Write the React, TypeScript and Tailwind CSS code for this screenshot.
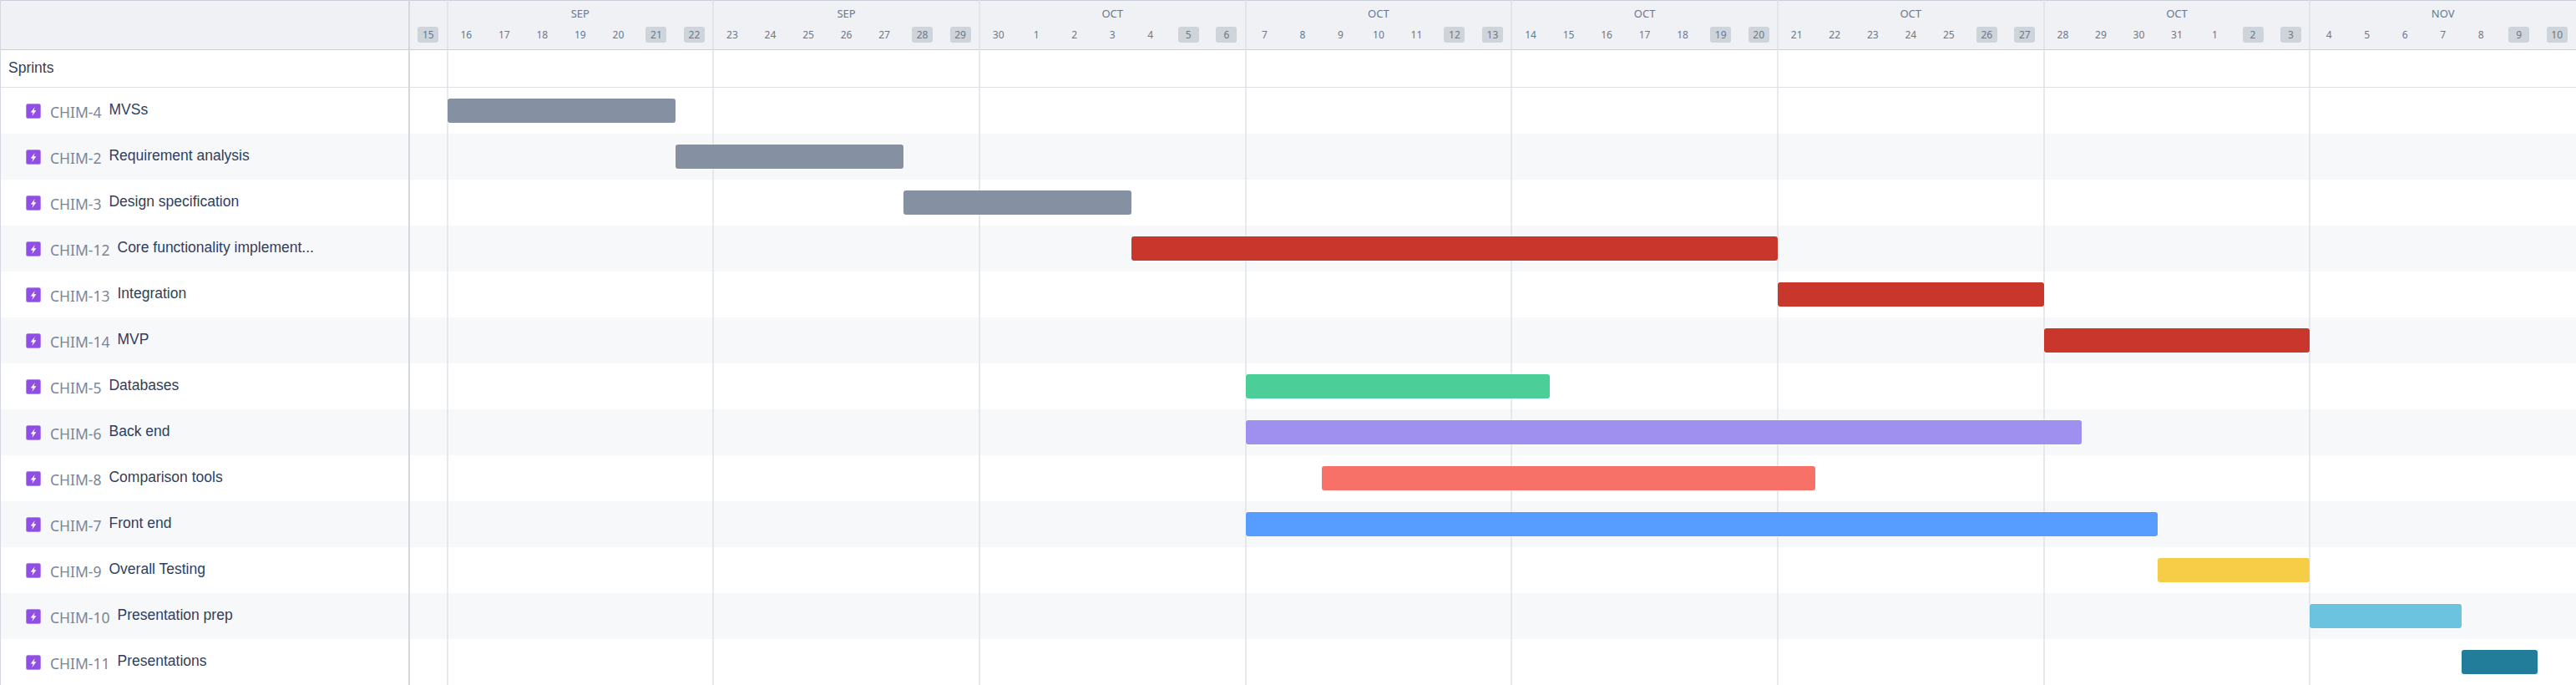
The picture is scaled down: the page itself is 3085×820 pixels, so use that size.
import { Fragment } from 'react';

// [key, title, first day index, end day index, bar colour]
const issues = [
  { id: 'CHIM-4', title: 'MVSs', start: 1, end: 7, color: 'bg-[#8590a2]' },
  { id: 'CHIM-2', title: 'Requirement analysis', start: 7, end: 13, color: 'bg-[#8590a2]' },
  { id: 'CHIM-3', title: 'Design specification', start: 13, end: 19, color: 'bg-[#8590a2]' },
  { id: 'CHIM-12', title: 'Core functionality implement...', start: 19, end: 36, color: 'bg-[#c9372c]' },
  { id: 'CHIM-13', title: 'Integration', start: 36, end: 43, color: 'bg-[#c9372c]' },
  { id: 'CHIM-14', title: 'MVP', start: 43, end: 50, color: 'bg-[#c9372c]' },
  { id: 'CHIM-5', title: 'Databases', start: 22, end: 30, color: 'bg-[#4bce97]' },
  { id: 'CHIM-6', title: 'Back end', start: 22, end: 44, color: 'bg-[#9f8fef]' },
  { id: 'CHIM-8', title: 'Comparison tools', start: 24, end: 37, color: 'bg-[#f87168]' },
  { id: 'CHIM-7', title: 'Front end', start: 22, end: 46, color: 'bg-[#579dff]' },
  { id: 'CHIM-9', title: 'Overall Testing', start: 46, end: 50, color: 'bg-[#f5cd47]' },
  { id: 'CHIM-10', title: 'Presentation prep', start: 50, end: 54, color: 'bg-[#6cc3e0]' },
  { id: 'CHIM-11', title: 'Presentations', start: 54, end: 56, color: 'bg-[#227d9b]' },
];

const months = ['SEP', 'SEP', 'OCT', 'OCT', 'OCT', 'OCT', 'OCT', 'NOV'];

const days = [
  15, 16, 17, 18, 19, 20, 21, 22, 23, 24, 25, 26, 27, 28, 29, 30, 1, 2, 3, 4, 5, 6, 7, 8, 9, 10, 11, 12, 13, 14, 15, 16, 17,
  18, 19, 20, 21, 22, 23, 24, 25, 26, 27, 28, 29, 30, 31, 1, 2, 3, 4, 5, 6, 7, 8, 9, 10,
];

const isWeekend = (index: number) => index % 7 === 0 || index % 7 === 6;

const EpicIcon = () => (
  <svg className="h-[18px] w-[18px] shrink-0" viewBox="0 0 18 18">
    <rect x="0.25" y="0.25" width="17.5" height="17.5" rx="2.5" fill="#904ee2" stroke="#c3a2f0" strokeWidth="0.5" />
    <path d="M10.8 4 5.8 10.4h2.8L7.4 15 12.4 8.2H9.4z" fill="#fff" />
  </svg>
);

const App = () => {
  return (
    <div className="flex h-[820px] w-[3085px] overflow-hidden bg-white font-['Noto_Sans',sans-serif]">
      {/* Issue list */}
      <div className="w-[490px] shrink-0 border-l border-[#d3d7df]">
        <div className="h-[60px] border-t border-b border-[#c9ced8] bg-[#f0f1f4]" />
        <div className="flex h-[45px] items-center border-b border-[#dfe1e6] pb-px pl-[9px] font-['Liberation_Sans',sans-serif] text-[17.5px] text-[#2f3f5c]">
          Sprints
        </div>
        {issues.map((issue, i) => (
          <div
            key={issue.id}
            className={`flex h-[55px] items-center pl-[30px] ${i % 2 === 1 ? 'bg-[#f7f8fa]' : 'bg-white'}`}
          >
            <EpicIcon />
            <span className="ml-[11px] pt-[3px] text-[17.5px] text-[#7a8699]">{issue.id}</span>
            <span className="ml-[9px] pb-[2px] font-['Liberation_Sans',sans-serif] text-[17.5px] text-[#2f3f5c]">
              {issue.title}
            </span>
          </div>
        ))}
      </div>

      {/* Timeline */}
      <div className="relative min-w-0 flex-1">
        <div className="grid h-[60px] grid-cols-[repeat(57,minmax(0,1fr))] grid-rows-[31px_1fr] border-t border-b border-[#c9ced8] bg-[#f0f1f4] text-[#6b778c]">
          <div />
          {months.map((month, i) => (
            <div key={i} className="col-span-7 flex items-center justify-center text-[13px]">
              {month}
            </div>
          ))}
          {days.map((day, i) => (
            <Fragment key={i}>
              <div className="flex items-start justify-center text-[12px]">
                <span
                  className={`flex h-[19px] w-[25px] items-center justify-center rounded-[3px] ${
                    isWeekend(i) ? 'bg-[#cfd4db]' : ''
                  }`}
                >
                  {day}
                </span>
              </div>
            </Fragment>
          ))}
        </div>
        <div className="h-[45px] border-b border-[#dfe1e6]" />
        {issues.map((issue, i) => (
          <div
            key={issue.id}
            className={`grid h-[55px] grid-cols-[repeat(57,minmax(0,1fr))] ${i % 2 === 1 ? 'bg-[#f7f8fa]' : 'bg-white'}`}
          >
            <div
              className={`relative z-10 mt-[13px] h-[29px] rounded-[3px] shadow-[0_0_0_1px_rgba(255,255,255,0.5)] ${issue.color}`}
              style={{ gridColumn: `${issue.start + 1} / ${issue.end + 1}` }}
            />
          </div>
        ))}

        {/* Week lines sit over the rows, under the bars */}
        <div className="pointer-events-none absolute inset-0 grid grid-cols-[repeat(57,minmax(0,1fr))]">
          <div className="-ml-px border-l-2 border-[#d3d7df]" />
          {months.map((_, i) => (
            <div key={i} className="col-span-7 -ml-px border-l-2 border-[#dcdfe5]/70" />
          ))}
        </div>
      </div>
    </div>
  );
};

export default App;
